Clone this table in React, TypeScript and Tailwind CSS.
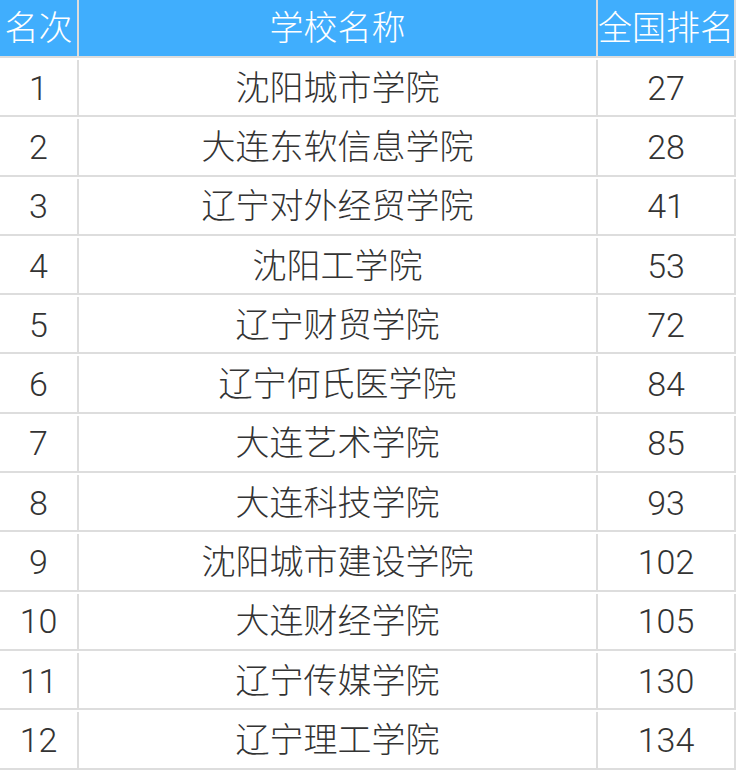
const ROWS: [number, string, number][] = [
  [1, "沈阳城市学院", 27],
  [2, "大连东软信息学院", 28],
  [3, "辽宁对外经贸学院", 41],
  [4, "沈阳工学院", 53],
  [5, "辽宁财贸学院", 72],
  [6, "辽宁何氏医学院", 84],
  [7, "大连艺术学院", 85],
  [8, "大连科技学院", 93],
  [9, "沈阳城市建设学院", 102],
  [10, "大连财经学院", 105],
  [11, "辽宁传媒学院", 130],
  [12, "辽宁理工学院", 134],
];

export default function App() {
  return (
    <div
      className="w-[736px] bg-white text-[34px] font-light leading-none text-[#333333]"
      style={{ fontFamily: 'Roboto, "Noto Sans CJK SC", sans-serif' }}
    >
      <div className="flex h-[58px] border-b-2 border-[#dddddd] bg-[#40aefd] text-white">
        <div className="flex w-[79px] items-center justify-center border-r-2 border-[#dddddd]">名次</div>
        <div className="flex w-[519px] items-center justify-center border-r-2 border-[#dddddd]">学校名称</div>
        <div className="flex w-[138px] items-center justify-center border-r-2 border-[#dddddd]">全国排名</div>
      </div>
      {ROWS.map(([rank, name, national]) => (
        <div key={rank} className="flex h-[59.3px] border-b-2 border-[#dddddd] pt-[2px]">
          <div className="flex w-[79px] items-center justify-center border-r-2 border-[#dddddd]">{rank}</div>
          <div className="flex w-[519px] items-center justify-center border-r-2 border-[#dddddd]">{name}</div>
          <div className="flex w-[138px] items-center justify-center border-r-2 border-[#dddddd]">{national}</div>
        </div>
      ))}
    </div>
  );
}
